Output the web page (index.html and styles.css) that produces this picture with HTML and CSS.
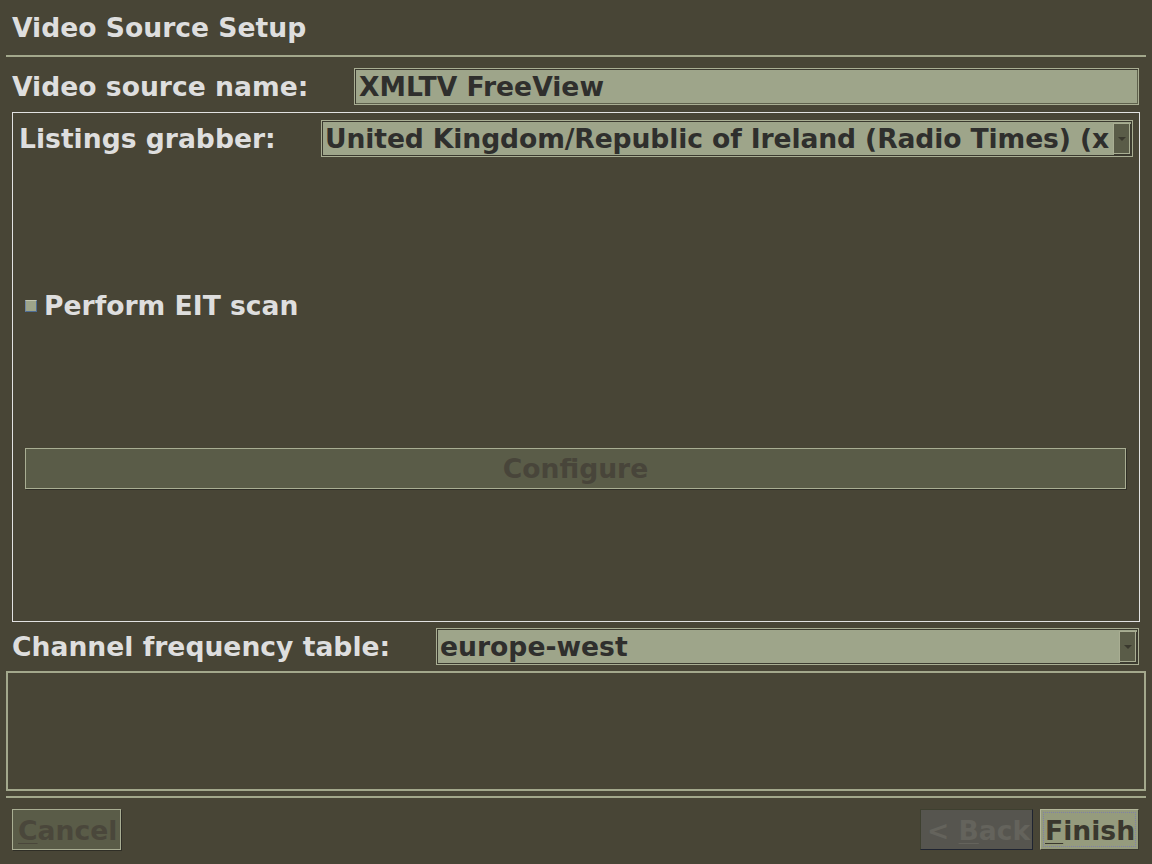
FILE: index.html
```html
<!DOCTYPE html>
<html>
<head>
<meta charset="utf-8">
<title>Video Source Setup</title>
<link rel="stylesheet" href="styles.css">
</head>
<body>
<div class="page">
  <div class="title">Video Source Setup</div>
  <div class="rule"></div>

  <div class="row name-row">
    <div class="label name-label">Video source name:</div>
    <div class="field">XMLTV FreeView</div>
  </div>

  <div class="group">
    <div class="row grabber-row">
      <div class="label grabber-label">Listings grabber:</div>
      <div class="combo grabber-combo">
        <div class="combo-text tight">United Kingdom/Republic of Ireland (Radio Times) (x</div>
        <div class="combo-btn"><span class="tri"></span></div>
      </div>
    </div>
    <div class="check-row">
      <span class="checkbox"></span>
      <span class="label">Perform EIT scan</span>
    </div>
    <div class="configure">Configure</div>
  </div>

  <div class="row chan-row">
    <div class="label chan-label">Channel frequency table:</div>
    <div class="combo chan-combo">
      <div class="combo-text">europe-west</div>
      <div class="combo-btn"><span class="tri"></span></div>
    </div>
  </div>

  <div class="frame"></div>
  <div class="rule rule-bottom"></div>

  <div class="buttons">
    <div class="btn btn-cancel"><u>C</u>ancel</div>
    <div class="spacer"></div>
    <div class="btn btn-back">&lt; <u>B</u>ack</div>
    <div class="btn btn-finish"><span class="focus"><u>F</u>inish</span></div>
  </div>
</div>
</body>
</html>
```

FILE: styles.css
```css
html, body {
  margin: 0;
  padding: 0;
  background: #484536;
}

body {
  width: 1152px;
  height: 864px;
  overflow: hidden;
  font-family: "DejaVu Sans", "Liberation Sans", sans-serif;
  font-weight: bold;
  font-size: 26.6px;
  color: #dedede;
}

.page {
  padding: 0 6px;
  display: flex;
  flex-direction: column;
}

.title {
  padding: 13px 0 0 6px;
  height: 42px;
  line-height: 30px;
}

.rule {
  height: 2px;
  background: #a3a88c;
}

.row {
  display: flex;
  align-items: center;
}

.label {
  line-height: 30px;
  white-space: nowrap;
}

.name-row {
  margin-top: 11px;
  padding: 0 7px 0 6px;
}

.name-label {
  width: 342px;
}

.field {
  flex: 1;
  height: 35px;
  line-height: 36px;
  background: #9ea58a;
  border: 1px solid #a9ae93;
  box-shadow: inset 1px 1px 0 #3b3a2f, inset -1px -1px 0 #5e604c;
  color: #2f2f2d;
  padding-left: 4px;
  white-space: nowrap;
  overflow: hidden;
}

.group {
  margin: 7px 6px 0 6px;
  height: 508px;
  border: 1px solid #e2e2e2;
  display: flex;
  flex-direction: column;
}

.grabber-row {
  margin-top: 7px;
  padding: 0 6px;
}

.grabber-label {
  width: 302px;
}

.combo {
  flex: 1;
  height: 35px;
  background: #9ea58a;
  border: 1px solid #a9ae93;
  box-shadow: inset 1px 1px 0 #3b3a2f, inset -1px -1px 0 #3b3a2f;
  display: flex;
  align-items: stretch;
  overflow: hidden;
}

.combo-text {
  flex: 1;
  min-width: 0;
  overflow: hidden;
  white-space: nowrap;
  padding-left: 3px;
  line-height: 35px;
  color: #2f2f2d;
}

.combo-text.tight {
  letter-spacing: -0.12px;
}

.combo-btn {
  width: 15px;
  margin: 2px 2px 2px 0;
  background: #5a5c48;
  border: 1px solid #a9ae93;
  box-shadow: 1px 1px 0 #3b3a2f;
  display: flex;
  align-items: center;
  justify-content: center;
}

.tri {
  width: 0;
  height: 0;
  border-left: 4px solid transparent;
  border-right: 4px solid transparent;
  border-top: 4px solid #3a392e;
}

.check-row {
  margin-top: 134px;
  margin-left: 12px;
  height: 30px;
  display: flex;
  align-items: center;
}

.checkbox {
  width: 10px;
  height: 10px;
  background: #9ea58a;
  border: 1px solid #4f6d94;
  border-top-color: #c2c6b0;
  border-left-color: #6f88a8;
  margin-right: 7px;
}

.configure {
  margin: 127px 13px 0 12px;
  height: 39px;
  line-height: 39px;
  text-align: center;
  background: #5a5c48;
  border: 1px solid #a9ae93;
  box-shadow: 1px 1px 0 #2f2e26;
  color: #48453a;
}

.chan-row {
  margin-top: 6px;
  padding: 0 7px 0 6px;
}

.chan-label {
  width: 424px;
}

.frame {
  margin-top: 6px;
  height: 116px;
  border: 2px solid #a3a88c;
}

.rule-bottom {
  margin-top: 5px;
}

.buttons {
  margin-top: 11px;
  padding: 0 7px 0 6px;
  display: flex;
  align-items: stretch;
  height: 41px;
}

.spacer {
  flex: 1;
}

.btn {
  box-sizing: border-box;
  height: 41px;
  line-height: 41px;
  padding: 0 4px 0 5px;
  white-space: nowrap;
}

.btn u {
  text-decoration-thickness: 1px;
  text-underline-offset: 3px;
}

.btn-cancel {
  width: 109px;
  background: #5a5c48;
  border: 1px solid #a9ae93;
  box-shadow: 1px 1px 0 #2f2e26;
  color: #4a473b;
}

.btn-back {
  width: 113px;
  background: #56554f;
  border: 1px solid #3e4030;
  border-right-color: #1f2431;
  border-bottom-color: #1f2431;
  color: #64635c;
  margin-right: 7px;
  padding-left: 6px;
}

.btn-finish {
  width: 99px;
  background: #959b7d;
  border: 1px solid #b3b79b;
  border-right-color: #3a392f;
  border-bottom-color: #3a392f;
  color: #3a382e;
  padding: 2px;
}

.focus {
  display: block;
  height: 35px;
  line-height: 37px;
  outline: 1px dotted #7e80a8;
  outline-offset: -1px;
  padding-left: 2px;
}
```
